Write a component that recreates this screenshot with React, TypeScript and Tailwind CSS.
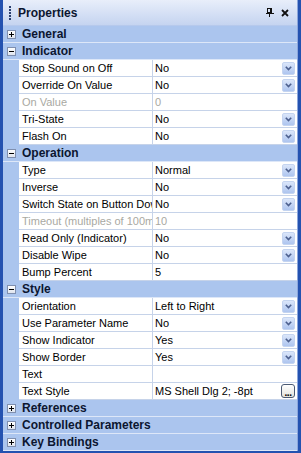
import React from "react";

type Prop = { name: string; value: string; dd?: boolean; disabled?: boolean; ellipsis?: boolean };
type Cat = { name: string; open: boolean; props?: Prop[] };

const cats: Cat[] = [
  { name: "General", open: false },
  {
    name: "Indicator",
    open: true,
    props: [
      { name: "Stop Sound on Off", value: "No", dd: true },
      { name: "Override On Value", value: "No", dd: true },
      { name: "On Value", value: "0", disabled: true },
      { name: "Tri-State", value: "No", dd: true },
      { name: "Flash On", value: "No", dd: true },
    ],
  },
  {
    name: "Operation",
    open: true,
    props: [
      { name: "Type", value: "Normal", dd: true },
      { name: "Inverse", value: "No", dd: true },
      { name: "Switch State on Button Down", value: "No", dd: true },
      { name: "Timeout (multiples of 100ms)", value: "10", disabled: true },
      { name: "Read Only (Indicator)", value: "No", dd: true },
      { name: "Disable Wipe", value: "No", dd: true },
      { name: "Bump Percent", value: "5" },
    ],
  },
  {
    name: "Style",
    open: true,
    props: [
      { name: "Orientation", value: "Left to Right", dd: true },
      { name: "Use Parameter Name", value: "No", dd: true },
      { name: "Show Indicator", value: "Yes", dd: true },
      { name: "Show Border", value: "Yes", dd: true },
      { name: "Text", value: "" },
      { name: "Text Style", value: "MS Shell Dlg 2; -8pt", ellipsis: true },
    ],
  },
  { name: "References", open: false },
  { name: "Controlled Parameters", open: false },
  { name: "Key Bindings", open: false },
];

function Expander({ open }: { open: boolean }) {
  return (
    <div className="w-[9px] h-[9px] border border-[#7f8faf] bg-gradient-to-b from-white to-[#dfe4ee] flex items-center justify-center relative">
      <div className="absolute w-[5px] h-px bg-black" />
      {!open && <div className="absolute w-px h-[5px] bg-black" />}
    </div>
  );
}

function DropBtn() {
  return (
    <div className="w-[13px] h-[13px] rounded-[2px] bg-gradient-to-b from-[#dbe6fa] to-[#aec5ef] border border-[#c4d4f0] flex items-center justify-center">
      <svg width="7" height="5" viewBox="0 0 7 5">
        <polyline points="0.8,0.8 3.5,3.6 6.2,0.8" fill="none" stroke="#4c5f8e" strokeWidth="1.6" />
      </svg>
    </div>
  );
}

function EllipsisBtn() {
  return (
    <div className="w-[14px] h-[14px] rounded-[3px] border border-[#4b5a73] bg-gradient-to-b from-white to-[#e3e3dc] flex items-end justify-center">
      <span className="text-[10px] leading-[9px] font-bold text-black tracking-[-0.5px]">...</span>
    </div>
  );
}

export default function App() {
  return (
    <div className="w-[301px] h-[453px] bg-[#2452b0] flex flex-col font-['Liberation_Sans',Arial,sans-serif] text-[11px] text-black overflow-hidden">
      <div className="flex-1 ml-[3px] mr-[3px] mb-[2px] flex flex-col border-r border-[#8ba6dc] bg-[#abc5ee]">
        {/* Title bar */}
        <div className="h-[26px] flex items-center bg-gradient-to-b from-[#e8eefa] to-[#c5d4f0] border-b border-[#b6c9ec]">
          <div className="ml-[6px] w-[2px] flex flex-col gap-[1px]">
            {[0, 1, 2, 3, 4].map((i) => (
              <div key={i} className="w-[2px] h-[2px] bg-[#2a3f6e]" />
            ))}
          </div>
          <span className="ml-[7px] font-bold text-[12px] text-[#0c1630]">Properties</span>
          <div className="ml-auto flex items-center gap-[7px] mr-[8px]">
            <svg width="8" height="9" viewBox="0 0 8 9">
              <rect x="1.5" y="0.5" width="4" height="4" fill="none" stroke="#111" />
              <rect x="4" y="0" width="2" height="5" fill="#111" />
              <rect x="0" y="5" width="8" height="1" fill="#111" />
              <rect x="3" y="6" width="1" height="3" fill="#111" />
            </svg>
            <svg width="8" height="8" viewBox="0 0 8 8">
              <path d="M1 1 L7 7 M7 1 L1 7" stroke="#111" strokeWidth="1.8" />
            </svg>
          </div>
        </div>
        {/* Rows */}
        {cats.map((c) => (
          <React.Fragment key={c.name}>
            <div className="h-[17px] flex items-center border-b border-[#dde7f8] bg-[#abc5ee] shrink-0">
              <div className="w-[16px] flex justify-center items-center">
                <Expander open={c.open} />
              </div>
              <span className="ml-[3px] font-bold text-[12px] text-[#0c1630] whitespace-nowrap">{c.name}</span>
            </div>
            {c.open &&
              c.props!.map((p) => (
                <div key={p.name} className="h-[17px] flex shrink-0">
                  <div className="w-[16px] bg-[#abc5ee]" />
                  <div className="w-[134px] bg-white border-b border-r border-[#c6d3e9] pl-[3px] flex items-center overflow-hidden whitespace-nowrap">
                    <span className={p.disabled ? "text-[#a9a9a2]" : "text-black"}>{p.name}</span>
                  </div>
                  <div className="flex-1 bg-white border-b border-[#c6d3e9] pl-[2px] pr-[2px] flex items-center whitespace-nowrap">
                    <span className={p.disabled ? "text-[#a9a9a2]" : "text-black"}>{p.value}</span>
                    <div className="ml-auto">
                      {p.dd && <DropBtn />}
                      {p.ellipsis && <EllipsisBtn />}
                    </div>
                  </div>
                </div>
              ))}
          </React.Fragment>
        ))}
      </div>
    </div>
  );
}
